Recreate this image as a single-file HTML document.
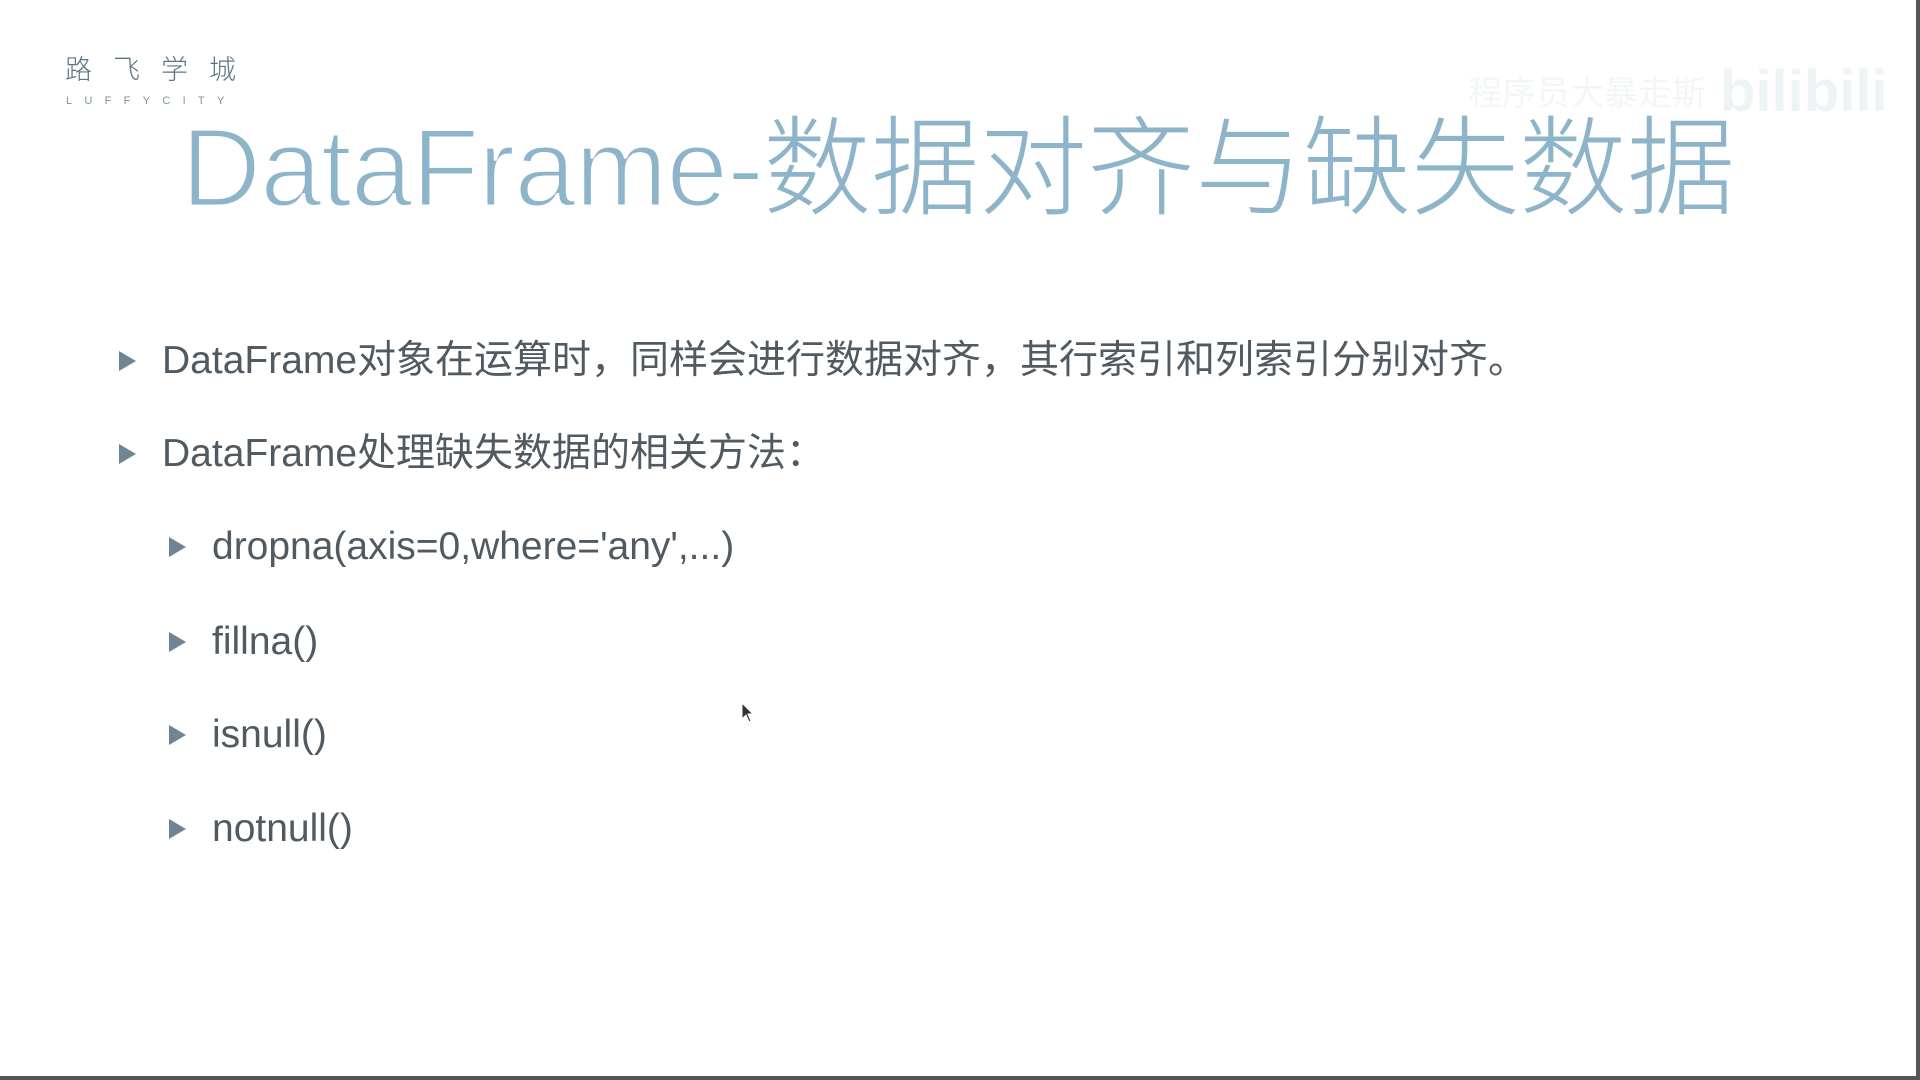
<!DOCTYPE html>
<html><head><meta charset="utf-8"><style>
html,body{margin:0;padding:0}
body{width:1920px;height:1080px;background:#fff;position:relative;overflow:hidden;font-family:"Liberation Sans","Noto Sans CJK SC",sans-serif}
.r{position:absolute;right:0;top:0;width:4px;height:1080px;background:#555}
.b{position:absolute;left:0;bottom:0;width:1920px;height:4px;background:#555}
.logo{position:absolute;left:65px;top:50px;font-size:27px;letter-spacing:21px;color:#5b7585;font-family:"Noto Sans CJK SC",sans-serif;font-weight:300;line-height:36px;white-space:nowrap}
.sub{position:absolute;left:66px;top:94px;font-size:11px;letter-spacing:12.3px;color:#7a95a5;line-height:14px}
.title{position:absolute;left:181px;top:95px;font-size:111px;color:#8db4c9;line-height:130px;white-space:nowrap;letter-spacing:-1px;-webkit-text-stroke:3px #fff;paint-order:normal}
.title span{font-family:"Noto Sans CJK SC",sans-serif;font-weight:200;font-size:108px;-webkit-text-stroke:0;letter-spacing:0}
.wm{position:absolute;left:1468px;top:58px;font-size:34px;color:#f3f6f7;font-family:"Noto Sans CJK SC",sans-serif;white-space:nowrap}
.wm b{font-family:"Liberation Sans",sans-serif;font-size:58px;color:#eef3f5;margin-left:14px;vertical-align:-6px}
.li{position:absolute;font-size:39px;color:#505a62;white-space:nowrap;line-height:50px}
.tri{position:absolute;width:0;height:0;border-top:10px solid transparent;border-bottom:10px solid transparent;border-left:17px solid #6f8594}
</style></head><body>
<div class="logo">路飞学城</div>
<div class="sub">LUFFYCITY</div>
<div class="wm">程序员大暴走斯<b>bilibili</b></div>
<div class="title">DataFrame-<span>数据对齐与缺失数据</span></div>

<div class="tri" style="left:119px;top:351px"></div>
<div class="li" style="left:162px;top:336px">DataFrame对象在运算时，同样会进行数据对齐，其行索引和列索引分别对齐。</div>
<div class="tri" style="left:119px;top:444px"></div>
<div class="li" style="left:162px;top:429px">DataFrame处理缺失数据的相关方法：</div>

<div class="tri" style="left:169px;top:537px"></div>
<div class="li" style="left:212px;top:522px">dropna(axis=0,where='any',...)</div>
<div class="tri" style="left:169px;top:632px"></div>
<div class="li" style="left:212px;top:617px">fillna()</div>
<div class="tri" style="left:169px;top:725px"></div>
<div class="li" style="left:212px;top:710px">isnull()</div>
<div class="tri" style="left:169px;top:819px"></div>
<div class="li" style="left:212px;top:804px">notnull()</div>

<svg style="position:absolute;left:741px;top:702px" width="14" height="22" viewBox="0 0 14 22"><path d="M1 1 L1 17 L5 13 L8 20 L10 19 L7 12 L12 12 Z" fill="#333" stroke="#fff" stroke-width="1"/></svg>
<div class="r"></div><div class="b"></div>
</body></html>
